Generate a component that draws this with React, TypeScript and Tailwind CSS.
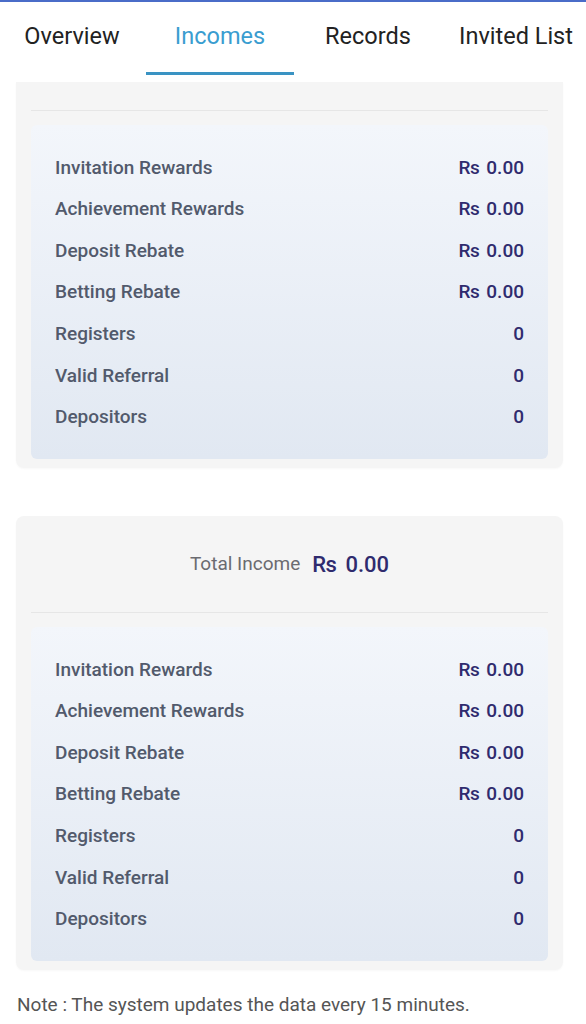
import React from 'react';

const tabs = ['Overview', 'Incomes', 'Records', 'Invited List'];

type Row = { label: string; value: string; money?: boolean };

const rows: Row[] = [
  { label: 'Invitation Rewards', value: '0.00', money: true },
  { label: 'Achievement Rewards', value: '0.00', money: true },
  { label: 'Deposit Rebate', value: '0.00', money: true },
  { label: 'Betting Rebate', value: '0.00', money: true },
  { label: 'Registers', value: '0' },
  { label: 'Valid Referral', value: '0' },
  { label: 'Depositors', value: '0' },
];

function Breakdown() {
  return (
    <div className="mx-[15px] rounded-md bg-gradient-to-b from-[#f3f6fb] to-[#e1e8f2] px-6 pb-[21px] pt-[22px]">
      {rows.map((row) => (
        <div key={row.label} className="flex h-[41.6px] items-center justify-between">
          <span className="text-[19px] font-medium text-[#525a6c]">{row.label}</span>
          <span className="text-[19px] font-medium text-[#2f2b6e]">
            {row.money && <span className="mr-[7px] tracking-[-0.5px]">Rs</span>}
            {row.value}
          </span>
        </div>
      ))}
    </div>
  );
}

export default function App() {
  return (
    <div className="min-h-[1024px] overflow-hidden bg-white font-['Roboto',sans-serif]">
      <div className="overflow-hidden border-t-2 border-[#4a6cc8] bg-white pb-[6px]">
        <div className="ml-[-2px] grid grid-cols-[repeat(4,148px)]">
          {tabs.map((tab) => {
            const active = tab === 'Incomes';
            return (
              <div key={tab} className="relative flex h-[74px] items-start justify-center pt-[17px]">
                <span className={`whitespace-nowrap text-[23.5px] ${active ? 'text-[#3a9dd0]' : 'text-[#222]'}`}>
                  {tab}
                </span>
                {active && <div className="absolute bottom-[1px] left-0 right-0 h-[3px] bg-[#3a93c3]" />}
              </div>
            );
          })}
        </div>
      </div>

      {/* First card, header scrolled under the tab bar */}
      <div className="ml-4 w-[547px] rounded-b-lg bg-[#f5f5f5] pb-[9px] shadow-[0_1px_2px_rgba(0,0,0,0.03)]">
        <div className="mx-[15px] h-[29px] border-b border-[#e6e6e6]" />
        <div className="h-[14px]" />
        <Breakdown />
      </div>

      {/* Second card */}
      <div className="ml-4 mt-[48px] w-[547px] rounded-lg bg-[#f5f5f5] pb-[9px] shadow-[0_1px_2px_rgba(0,0,0,0.03)]">
        <div className="mx-[15px] flex h-[97px] items-center justify-center gap-3 border-b border-[#e6e6e6]">
          <span className="text-[19px] text-[#6b6b70]">Total Income</span>
          <span className="text-[22px] font-medium text-[#2f2b6e]">
            <span className="mr-[9px] tracking-[-0.5px]">Rs</span>0.00
          </span>
        </div>
        <div className="h-[14px]" />
        <Breakdown />
      </div>

      <p className="ml-[17px] mt-[21px] text-[19px] text-[#555]">
        Note : The system updates the data every 15 minutes.
      </p>
    </div>
  );
}
